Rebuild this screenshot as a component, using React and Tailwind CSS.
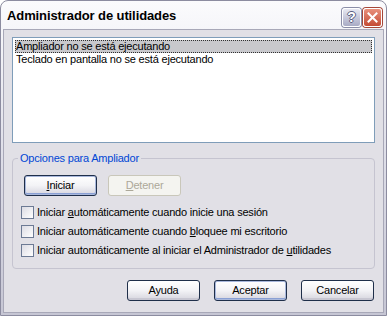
import React from 'react';

const font = { fontFamily: '"Liberation Sans", Arial, sans-serif' };

function XpButton({ children, disabled, isDefault, className = '' }) {
  if (disabled) {
    return (
      <div className={`h-[21px] w-[73px] rounded-[3px] border border-[#c9c7ba] bg-[#f4f4f0] flex items-center justify-center text-[11px] tracking-[-0.2px] text-[#aca899] ${className}`}>
        {children}
      </div>
    );
  }
  return (
    <div className={`h-[21px] w-[73px] rounded-[3px] border border-[#1f2f4a] bg-gradient-to-b from-[#ffffff] via-[#f3f3f6] to-[#d6d5de] flex items-center justify-center text-[11px] tracking-[-0.2px] text-black ${isDefault ? 'shadow-[inset_0_0_0_1px_#a9b8dc,inset_0_-1px_0_1px_#8aa0d4]' : 'shadow-[inset_0_-2px_0_#c8c7d2]'} ${className}`}>
      {children}
    </div>
  );
}

function Check({ children }) {
  return (
    <div className="flex items-center gap-[3px] h-[13px]">
      <div className="w-[13px] h-[13px] border border-[#6c7a94] bg-gradient-to-br from-[#dcdce4] to-[#ffffff]" />
      <span className="text-[11px] leading-[13px] tracking-[-0.2px] text-black">{children}</span>
    </div>
  );
}

export default function App() {
  return (
    <div className="w-[387px] h-[316px] bg-white" style={font}>
      <div className="w-[387px] h-[316px] rounded-t-[8px] border border-[#8c8ca0] bg-gradient-to-b from-[#fbfbfd] via-[#dedee8] to-[#c6c6d4] flex flex-col overflow-hidden">
        {/* title bar */}
        <div className="h-[28px] flex items-center pl-[6px] pr-[4px] shrink-0">
          <span className="text-[13px] font-bold tracking-[-0.1px] text-black flex-1 pt-[2px]">Administrador de utilidades</span>
          <div className="w-[19px] h-[19px] rounded-[3px] border border-white bg-gradient-to-b from-[#e7e8f2] to-[#a9abc5] flex items-center justify-center mr-[2px] mt-[4px] shadow-[0_0_0_1px_#8b8ea8]">
            <span
              className="text-[14px] font-bold text-white leading-none"
              style={{ textShadow: '1px 0 #5b5f80, -1px 0 #5b5f80, 0 1px #5b5f80, 0 -1px #5b5f80' }}
            >?</span>
          </div>
          <div className="w-[19px] h-[19px] rounded-[3px] border border-white bg-gradient-to-b from-[#e8907c] to-[#c44a34] flex items-center justify-center mt-[4px] shadow-[0_0_0_1px_#a5483a]">
            <svg width="11" height="11" viewBox="0 0 11 11">
              <path d="M1.5 1.5 L9.5 9.5 M9.5 1.5 L1.5 9.5" stroke="#ffffff" strokeWidth="2" strokeLinecap="square" />
            </svg>
          </div>
        </div>
        {/* client */}
        <div className="flex-1 mx-[2px] mb-[2px] border border-[#a8a8b8] bg-[#e1e0e6] flex flex-col px-[8px] pt-[7px]">
          <div className="h-[106px] border border-[#7f9db9] bg-white px-[2px] pt-[2px] shrink-0">
            <div className="h-[13px] bg-[#c8c8cc] outline-1 outline-dotted outline-[#303030] -outline-offset-1 text-[11px] leading-[13px] tracking-[-0.2px] pl-[1px]">Ampliador no se está ejecutando</div>
            <div className="h-[13px] text-[11px] leading-[13px] tracking-[-0.2px] pl-[1px]">Teclado en pantalla no se está ejecutando</div>
          </div>
          {/* group box */}
          <div className="relative mt-[15px] h-[111px] rounded-[4px] border border-[#c5c4d0] shrink-0 flex flex-col pl-[11px] pt-[16px]">
            <span className="absolute -top-[8px] left-[5px] px-[2px] bg-[#e1e0e6] text-[11px] leading-[14px] tracking-[-0.2px] text-[#0046d5]">Opciones para Ampliador</span>
            <div className="flex gap-[11px]">
              <XpButton isDefault><span className="underline underline-offset-[1px]">I</span>niciar</XpButton>
              <XpButton disabled><span className="underline underline-offset-[1px]">D</span>etener</XpButton>
            </div>
            <div className="flex flex-col gap-[6px] mt-[10px] -ml-[3px]">
              <Check>Iniciar <span className="underline underline-offset-[1px]">a</span>utomáticamente cuando inicie una sesión</Check>
              <Check>Iniciar automáticamente cuando <span className="underline underline-offset-[1px]">b</span>loquee mi escritorio</Check>
              <Check>Iniciar automáticamente al iniciar el Administrador de <span className="underline underline-offset-[1px]">u</span>tilidades</Check>
            </div>
          </div>
          <div className="flex justify-end gap-[14px] mt-[11px] pr-[1px]">
            <XpButton>Ayuda</XpButton>
            <XpButton isDefault>Aceptar</XpButton>
            <XpButton>Cancelar</XpButton>
          </div>
        </div>
      </div>
    </div>
  );
}
